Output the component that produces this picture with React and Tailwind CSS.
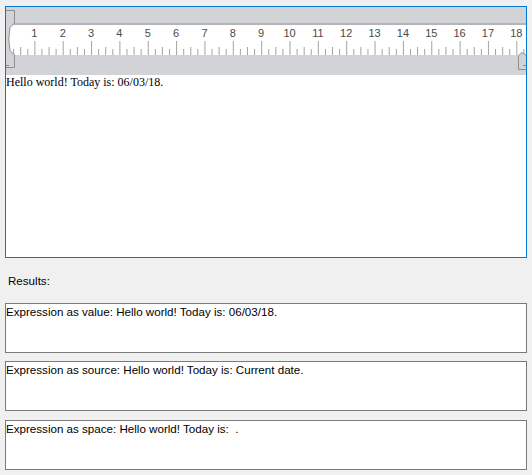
const CM = 28.35

const Ruler = () => {
  const ticks = []
  for (let i = 1; i < 74; i++) {
    const x = (i * CM) / 4
    if (x > 518) break
    const kind = i % 4 === 0 ? 'major' : i % 2 === 0 ? 'half' : 'quarter'
    const y1 = kind === 'major' ? 34 : kind === 'half' ? 40 : 42
    ticks.push(<line key={i} x1={x + 0.5} x2={x + 0.5} y1={y1} y2={48} stroke="#a3a3a3" strokeWidth="1" />)
  }
  const nums = []
  for (let n = 1; n <= 18; n++) {
    nums.push(
      <text key={n} x={n * CM} y={30} textAnchor="middle" fontSize="11" fill="#4a4a4a" fontFamily="'Liberation Sans', Arial, sans-serif">
        {n}
      </text>
    )
  }
  return (
    <svg width="520" height="68" viewBox="0 0 520 68" className="block">
      <rect x="0" y="0" width="520" height="68" fill="#d1d3d6" />
      <rect x="0" y="16" width="520" height="32" fill="#ffffff" />
      <rect x="0" y="16" width="520" height="2" fill="#b3b5b8" />
      {ticks}
      {nums}
      {/* left indent markers */}
      <path d="M0 3.5 H8.5 V16 L4 20.5 Q1.5 32 4 43.5 L8.5 48 V60.5 H0" fill="#d1d3d6" stroke="#8e8e8e" strokeWidth="1" />
      <path d="M0 58.5 H3" stroke="#8e8e8e" strokeWidth="1" />
      {/* right indent marker */}
      <path d="M520 48.5 L516 45.5 L512.5 48.5 V62.5 H520" fill="#d1d3d6" stroke="#8e8e8e" strokeWidth="1" />
      <path d="M517 58.5 H520" stroke="#8e8e8e" strokeWidth="1" />
    </svg>
  )
}

const ResultBox = ({ children, className = '' }) => (
  <div className={`h-[50px] w-[522px] border border-[#7a7a7a] bg-white text-[11.6px] leading-[16px] text-black ${className}`}>
    {children}
  </div>
)

const App = () => {
  return (
    <div className="h-[475px] w-[532px] overflow-hidden bg-[#f0f0f0] pl-[5px] pt-[6px] font-['Liberation_Sans',Arial,sans-serif]">
      <div className="flex h-[252px] w-[522px] flex-col border border-[#0078d7] bg-white">
        <Ruler />
        <div className="px-0 text-[12px] leading-[14px] text-black font-['Liberation_Serif','Times_New_Roman',serif]">
          Hello world! Today is: 06/03/18.
        </div>
      </div>
      <div className="mt-[15px] pl-[3px] text-[11.6px] leading-[16px] text-black">Results:</div>
      <ResultBox className="mt-[14px]">Expression as value: Hello world! Today is: 06/03/18.</ResultBox>
      <ResultBox className="mt-[8px]">Expression as source: Hello world! Today is: Current date.</ResultBox>
      <ResultBox className="mt-[9px]">Expression as space: Hello world! Today is: &nbsp;.</ResultBox>
    </div>
  )
}

export default App
